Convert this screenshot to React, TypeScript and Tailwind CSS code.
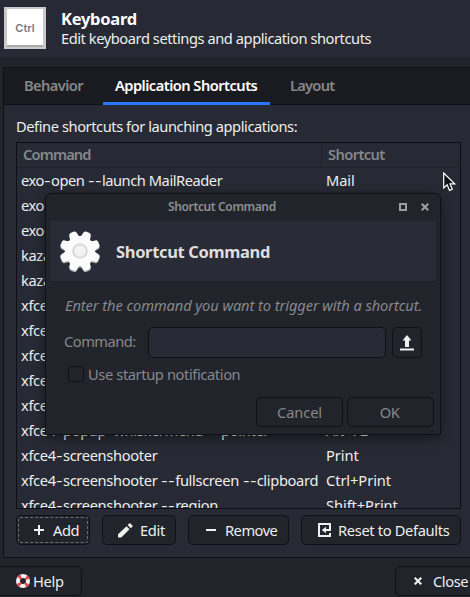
import React from "react";

type Row = { command: string; shortcut: string };

const rows: Row[] = [
  { command: "exo-open --launch MailReader", shortcut: "Mail" },
  { command: "exo-open --launch WebBrowser", shortcut: "WWW" },
  { command: "exo-open --launch FileManager", shortcut: "Super+E" },
  { command: "kazam --area", shortcut: "Super+A" },
  { command: "kazam --window", shortcut: "Super+W" },
  { command: "xfce4-appfinder", shortcut: "Alt+F3" },
  { command: "xfce4-appfinder", shortcut: "Super+R" },
  { command: "xfce4-display-settings", shortcut: "Display" },
  { command: "xfce4-display-settings", shortcut: "Super+P" },
  { command: "xfce4-terminal", shortcut: "Super+T" },
  { command: "xfce4-popup-whiskermenu --pointer", shortcut: "Alt+F2" },
  { command: "xfce4-screenshooter", shortcut: "Print" },
  { command: "xfce4-screenshooter --fullscreen --clipboard", shortcut: "Ctrl+Print" },
  { command: "xfce4-screenshooter --region", shortcut: "Shift+Print" },
];

function CommandText({ text }: { text: string }) {
  return (
    <>
      {text.split(/(-)/).map((part, i) =>
        part === "-" ? (
          <span key={i} className="mx-[1.4px] inline-block scale-x-130">-</span>
        ) : (
          part
        ),
      )}
    </>
  );
}

function PlusIcon() {
  return (
    <svg width="10" height="10" viewBox="0 0 10 10" fill="#f0f0ee" shapeRendering="crispEdges">
      <path d="M4 0h2v4h4v2H6v4H4V6H0V4h4z" />
    </svg>
  );
}

function PencilIcon() {
  return (
    <svg width="15" height="15" viewBox="0 0 15 15" fill="#f0f0ee">
      <path d="M0 14.500V11.200L8.500 3.200l3 3L3.300 14.500zM9.600 2.100 11.200.6q.6-.5 1.200 0l2 2q.6.6 0 1.200L12.700 5.300z" />
    </svg>
  );
}

function ResetIcon() {
  return (
    <svg width="13" height="14" viewBox="0 0 13 14">
      <path d="M12 3V1H1v12h11v-3" fill="none" stroke="#f0f0ee" strokeWidth="2" />
      <path d="M3.800 7 8 3.700V6h3V2h2v6H8v2.300z" fill="#f0f0ee" />
    </svg>
  );
}

function CloseIcon({ color }: { color: string }) {
  return (
    <svg width="8" height="8" viewBox="0 0 8 8">
      <path d="M.7.7l6.6 6.6M7.3.7L.7 7.3" stroke={color} strokeWidth="2.1" />
    </svg>
  );
}

function HelpIcon() {
  return (
    <svg width="14" height="14" viewBox="0 0 14 14">
      <circle cx="7" cy="7" r="5" fill="none" stroke="#f2f2f0" strokeWidth="4" />
      <circle cx="7" cy="7" r="5" fill="none" stroke="#e8434b" strokeWidth="4" strokeDasharray="2.6 5.254" strokeDashoffset="-2.63" />
    </svg>
  );
}

function GearIcon() {
  const teeth = [22.5, 67.5, 112.5, 157.5, 202.5, 247.5, 292.5, 337.5];
  return (
    <svg className="mt-[2px]" width="42" height="44" viewBox="0 0 42 44">
      {["#b9b9bb", "#fbfbfb"].map((fill, i) => (
        <g key={fill} fill={fill} transform={i === 0 ? "translate(0 1.4)" : undefined}>
          <circle cx="21" cy="21" r="15" />
          {teeth.map((angle) => (
            <path
              key={angle}
              d="M14.500 9Q17 6.500 17 3.200 17 1 19 .7h4Q25 1 25 3.200 25 6.500 27.500 9z"
              transform={`rotate(${angle} 21 21)`}
            />
          ))}
        </g>
      ))}
      <circle cx="21" cy="21" r="7" fill="#e9e9e9" stroke="#cfcfcf" strokeWidth="1.200" />
      <circle cx="21" cy="21" r="5" fill="#f4f4f4" />
    </svg>
  );
}

function Header() {
  return (
    <header className="flex h-[59px] border-b border-[#20222a] bg-[#272a34] pl-1">
      <div className="mt-[7px] flex h-[42px] w-[42px] justify-center bg-[#c9c9c9] pt-[2px]">
        <div className="flex h-[38px] w-9 items-center justify-center border-b-2 border-[#ababab] bg-white pt-[3px] font-[Inter,sans-serif] text-[11px] font-semibold leading-none text-[#777782]">
          Ctrl
        </div>
      </div>
      <div className="ml-[15px] mt-[9px] text-white">
        <h1 className="text-[16.5px] font-bold leading-5 tracking-[-0.27px]">Keyboard</h1>
        <p className="mt-[-1px] whitespace-nowrap leading-5 tracking-[-0.44px] text-[#eeeeec]">Edit keyboard settings and application shortcuts</p>
      </div>
    </header>
  );
}

function TextButton({ icon, label, className }: { icon: React.ReactNode; label: string; className: string }) {
  return (
    <button className={`flex h-[30px] shrink-0 items-center whitespace-nowrap rounded-[5px] border border-[#101116] bg-[#22242c] leading-none text-[#eeeeec] ${className}`}>
      {icon}
      <span>{label}</span>
    </button>
  );
}

function ShortcutDialog() {
  return (
    <section className="absolute left-[45px] top-[193px] flex h-[242px] w-[396px] flex-col rounded-t-[6px] border border-[#0f1015] bg-[#22242c] text-[#87888b] shadow-[0_3px_12px_rgba(0,0,0,0.45)]">
      <div className="flex h-[27px] items-center pb-px pl-[122px] pr-[11px] text-[12px] font-semibold">
        <span className="mr-auto tracking-[-0.37px] text-[#8d8e91]">Shortcut Command</span>
        <span className="mr-[14px] h-2 w-2 border-2 border-[#9b9ca0]" />
        <CloseIcon color="#9b9ca0" />
      </div>
      <div className="mx-1 flex h-[61px] items-center border-b border-[#20222a] bg-[#292b36] pl-[9px]">
        <GearIcon />
        <h2 className="ml-[15px] mt-[3px] text-[16.5px] font-bold tracking-[-0.34px] text-[#dededd]">Shortcut Command</h2>
      </div>
      <p className="ml-[19px] mt-[13px] whitespace-nowrap leading-5 tracking-[-0.09px] italic">Enter the command you want to trigger with a shortcut.</p>
      <div className="mt-3 flex items-center pl-[18px]">
        <label className="mt-[-3px] w-[84px] tracking-[-0.5px]">Command:</label>
        <div className="h-[31px] w-[238px] rounded-[5px] border border-[#101116] bg-[#272a34]" />
        <div className="ml-[6px] flex h-[31px] w-[30px] items-center justify-center rounded-[5px] border border-[#101116]">
          <svg width="14" height="16" viewBox="0 0 14 16" fill="#f0f0ee">
            <path d="M7 0l4.500 5.500H9V12H5V5.500H2.500zM0 13.500h14v2H0z" />
          </svg>
        </div>
      </div>
      <div className="mt-[6px] flex h-5 items-center pl-[22px]">
        <span className="h-4 w-4 rounded-[3px] border border-[#101116]" />
        <span className="ml-1 tracking-[-0.39px]">Use startup notification</span>
      </div>
      <div className="mt-[13px] flex justify-end gap-1 pr-[6px]">
        <button className="h-[30px] w-[87px] rounded-[5px] border border-[#101116] tracking-[-0.1px]">Cancel</button>
        <button className="h-[30px] w-[87px] rounded-[5px] border border-[#101116] pr-[2px] tracking-[-0.4px]">OK</button>
      </div>
    </section>
  );
}

export default function App() {
  return (
    <div className="relative flex h-[597px] w-[470px] flex-col overflow-hidden bg-[#22242c] font-['Noto_Sans',sans-serif] text-[14.67px] text-[#eeeeec]">
      <Header />
      <main className="ml-[3px] mt-2 flex h-[491px] w-[480px] flex-col border border-[#0f1015] bg-[#272a34]">
        <nav className="flex h-[37px] shrink-0 whitespace-nowrap border-b border-[#0f1015] bg-[#1a1b20] font-semibold leading-[35px] text-[#85878a]">
          <div className="w-[99px] pl-5 tracking-[-0.6px]">Behavior</div>
          <div className="relative w-[167px] pl-3 tracking-[-0.53px] text-white">
            Application Shortcuts
            <span className="absolute bottom-[-1px] left-0 h-[3px] w-full bg-[#2777ff]" />
          </div>
          <div className="pl-5 tracking-[-0.75px]">Layout</div>
        </nav>
        <p className="ml-3 mt-[11px] leading-5 tracking-[-0.43px]">Define shortcuts for launching applications:</p>
        <div className="ml-3 mt-[6px] h-[367px] w-[445px] shrink-0 overflow-hidden border border-[#0f1015]">
          <div className="flex h-[25px] border-b border-[#20222a] font-semibold leading-[23px] text-[#85878a]">
            <div className="w-[305px] border-r border-[#20222a] pl-[6px] tracking-[-0.85px]">Command</div>
            <div className="pl-[6px] tracking-[-0.6px]">Shortcut</div>
          </div>
          {rows.map((row, index) => (
            <div key={index} className={`flex h-[25px] whitespace-nowrap leading-6 ${index < 3 ? "tracking-[-0.45px]" : "tracking-[-0.34px]"}`}>
              <span className="w-[305px] shrink-0 pl-1"><CommandText text={row.command} /></span>
              <span className="pl-1 tracking-[-0.08px]">{row.shortcut}</span>
            </div>
          ))}
        </div>
        <div className="ml-3 mt-[6px] flex gap-3">
          <div className="relative">
            <TextButton className="w-[74px] gap-[9px] pl-[17px] tracking-[-0.4px]" icon={<PlusIcon />} label="Add" />
            <span className="absolute inset-[2px] rounded-[2px] border border-dashed border-[#6d6e72]" />
          </div>
          <TextButton className="w-[74px] gap-[7px] pl-[15px] tracking-[-0.3px]" icon={<PencilIcon />} label="Edit" />
          <TextButton className="w-[101px] gap-[9px] pl-[17px] tracking-[-0.5px]" icon={<span className="h-[2px] w-[10px] bg-[#f0f0ee]" />} label="Remove" />
          <TextButton className="w-[160px] gap-[7px] pl-[16px] tracking-[-0.34px]" icon={<ResetIcon />} label="Reset to Defaults" />
        </div>
      </main>
      <footer className="mt-2 flex justify-between">
        <TextButton className="ml-[-5px] w-[87px] gap-[3px] pl-[20px] tracking-[-0.3px]" icon={<HelpIcon />} label="Help" />
        <TextButton className="mr-[-15px] w-[90px] gap-[11px] pl-[18px] tracking-[-0.4px]" icon={<CloseIcon color="#f0f0ee" />} label="Close" />
      </footer>
      <ShortcutDialog />
      <svg className="absolute left-[443px] top-[172px]" width="13" height="21" viewBox="0 0 13 21">
        <path d="M.7 1v15l3.500-3.200 2.300 5.600 2.800-1.200L7 11.800h4.700z" fill="#111216" stroke="#fff" strokeWidth="1.200" />
      </svg>
    </div>
  );
}
